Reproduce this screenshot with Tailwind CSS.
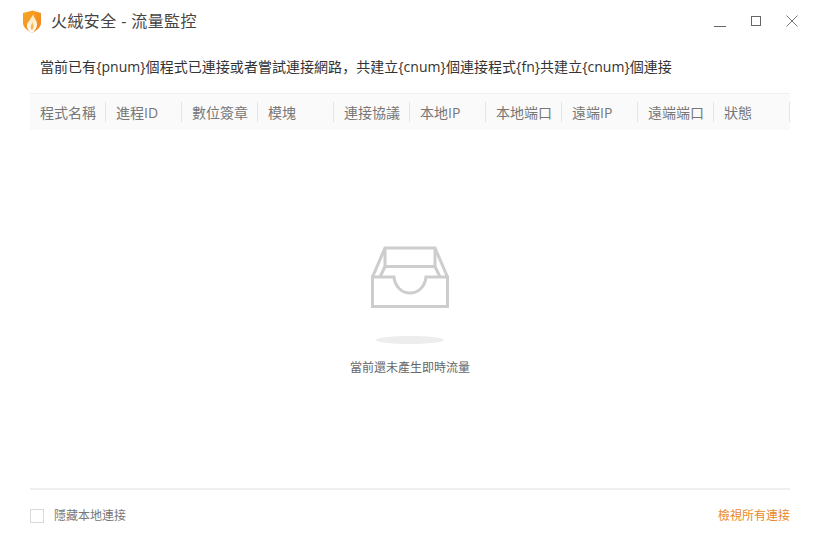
<!DOCTYPE html>
<html lang="zh-CN">
<head>
    <meta charset="UTF-8">
    <title>火絨安全 - 流量監控</title>
    <script src="https://cdn.jsdelivr.net/npm/@tailwindcss/browser@4"></script>
</head>
<body class="bg-white">
    <div class="w-[820px] h-[540px] flex flex-col overflow-hidden font-['Open_Sans','Noto_Sans_CJK_SC',sans-serif]">
        <!-- Title bar -->
        <div class="h-[42px] flex items-center pl-[22px] pr-[21px]">
            <svg width="20" height="23" viewBox="0 0 20 23">
                <defs>
                    <linearGradient id="shield" x1="0" y1="0" x2="1" y2="1">
                        <stop offset="0" stop-color="#f7a823"/>
                        <stop offset="1" stop-color="#f0821e"/>
                    </linearGradient>
                    <linearGradient id="flame" x1="0" y1="0" x2="0" y2="1">
                        <stop offset="0" stop-color="#fde3b4"/>
                        <stop offset="1" stop-color="#ffffff"/>
                    </linearGradient>
                </defs>
                <path d="M1 3 L10.5 0.5 L19 3 V13 C19 17.5 14.5 20.5 10 23 C5.5 20.5 1 17.5 1 13 Z" fill="url(#shield)"/>
                <path d="M11.5 4 C11.5 8 15.5 10 15 15 C14.6 18.5 12.5 21 10 23 C7 21.5 4.6 18.5 5 15 C5.3 12.5 7 11.5 8 9.5 C9 7.5 10.5 6 11.5 4 Z" fill="url(#flame)"/>
                <path d="M10.5 12 C11 14.5 12.2 15.5 11.5 17.8 C11.2 19 10.5 19.8 9.8 20.2 C8.6 18.8 8.3 17.2 9 15.6 C9.6 14.4 10.2 13.4 10.5 12 Z" fill="#f8b850"/>
            </svg>
            <h1 class="ml-[9px] text-[16px] leading-[20px] tracking-[0.4px] text-[#444]">火絨安全 - 流量監控</h1>
            <div class="ml-auto flex items-center gap-[22px]">
                <svg width="14" height="14" viewBox="0 0 14 14"><path d="M1 12.5 H13" stroke="#666" fill="none"/></svg>
                <svg width="14" height="14" viewBox="0 0 14 14"><rect x="2.5" y="2.5" width="9" height="9" stroke="#666" fill="none"/></svg>
                <svg width="14" height="14" viewBox="0 0 14 14"><path d="M1.5 1.5 L12.5 12.5 M12.5 1.5 L1.5 12.5" stroke="#777" fill="none"/></svg>
            </div>
        </div>

        <!-- Summary -->
        <p class="h-[51px] pb-[3px] pl-[40px] flex items-center text-[14px] tracking-[0.04px] text-[#333] whitespace-nowrap">當前已有{pnum}個程式已連接或者嘗試連接網路，共建立{cnum}個連接程式{fn}共建立{cnum}個連接</p>

        <!-- Table head -->
        <div class="mx-[30px] h-[37px] grid grid-cols-10 bg-[#fafafa] border-t border-[#f0f0f0] text-[14px] text-[#777]">
            <div class="flex items-center pl-[10px]"><span>程式名稱</span><i class="ml-auto h-[20px] w-px bg-[#e4e4e4]"></i></div>
            <div class="flex items-center pl-[10px]"><span>進程ID</span><i class="ml-auto h-[20px] w-px bg-[#e4e4e4]"></i></div>
            <div class="flex items-center pl-[10px]"><span>數位簽章</span><i class="ml-auto h-[20px] w-px bg-[#e4e4e4]"></i></div>
            <div class="flex items-center pl-[10px]"><span>模塊</span><i class="ml-auto h-[20px] w-px bg-[#e4e4e4]"></i></div>
            <div class="flex items-center pl-[10px]"><span>連接協議</span><i class="ml-auto h-[20px] w-px bg-[#e4e4e4]"></i></div>
            <div class="flex items-center pl-[10px]"><span>本地IP</span><i class="ml-auto h-[20px] w-px bg-[#e4e4e4]"></i></div>
            <div class="flex items-center pl-[10px]"><span>本地端口</span><i class="ml-auto h-[20px] w-px bg-[#e4e4e4]"></i></div>
            <div class="flex items-center pl-[10px]"><span>遠端IP</span><i class="ml-auto h-[20px] w-px bg-[#e4e4e4]"></i></div>
            <div class="flex items-center pl-[10px]"><span>遠端端口</span><i class="ml-auto h-[20px] w-px bg-[#e4e4e4]"></i></div>
            <div class="flex items-center pl-[10px]"><span>狀態</span><i class="ml-auto h-[20px] w-px bg-[#e4e4e4]"></i></div>
        </div>

        <!-- Empty state -->
        <div class="flex-1 flex flex-col items-center pt-[116px]">
            <svg width="78" height="62" viewBox="0 0 78 62" fill="none" stroke="#cdcdcd" stroke-width="3">
                <path d="M1.5 31 L14 2 H64 L76.5 31"/>
                <path d="M14 2 V20.5 H64 V2"/>
                <path d="M14 20.5 L9 31 M64 20.5 L69 31"/>
                <path d="M1.5 31 H23 C24 41 31 47 39 47 C47 47 54 41 55 31 H76.5 V60.5 H1.5 Z"/>
            </svg>
            <div class="mt-[28px] w-[68px] h-[8px] rounded-[50%] bg-[#ededed]"></div>
            <p class="mt-[15px] text-[12px] leading-[18px] text-[#666]">當前還未產生即時流量</p>
        </div>

        <!-- Footer -->
        <div class="mx-[30px] h-[52px] pt-[2px] border-t-2 border-[#efefef] flex items-center text-[12px]">
            <span class="w-[14px] h-[14px] border border-[#d9d9d9]"></span>
            <span class="ml-[10px] text-[#777]">隱藏本地連接</span>
            <a class="ml-auto text-[#e8882a]">檢視所有連接</a>
        </div>
    </div>
</body>
</html>
